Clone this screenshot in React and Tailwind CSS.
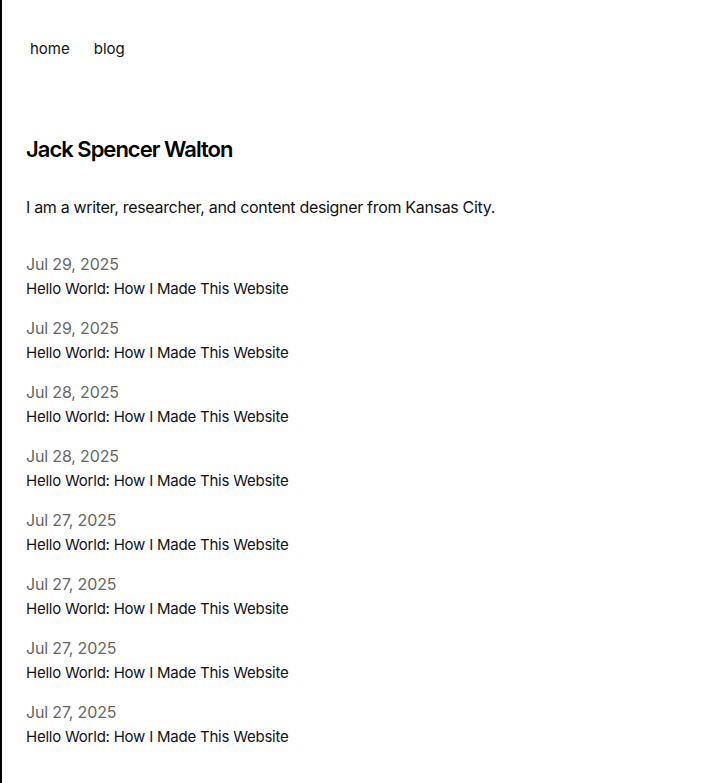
const posts = [
  { date: 'Jul 29, 2025', title: 'Hello World: How I Made This Website' },
  { date: 'Jul 29, 2025', title: 'Hello World: How I Made This Website' },
  { date: 'Jul 28, 2025', title: 'Hello World: How I Made This Website' },
  { date: 'Jul 28, 2025', title: 'Hello World: How I Made This Website' },
  { date: 'Jul 27, 2025', title: 'Hello World: How I Made This Website' },
  { date: 'Jul 27, 2025', title: 'Hello World: How I Made This Website' },
  { date: 'Jul 27, 2025', title: 'Hello World: How I Made This Website' },
  { date: 'Jul 27, 2025', title: 'Hello World: How I Made This Website' },
];

export default function App() {
  return (
    <div className="min-h-screen bg-white border-l-2 border-black font-['Inter',sans-serif] text-[#111] tracking-[-0.02em]">
      <div className="px-6 pt-9 pb-8">
        <nav className="flex gap-6 px-1 pt-px text-[15px] leading-6 tracking-normal">
          <a href="#">home</a>
          <a href="#">blog</a>
        </nav>

        <h1 className="mt-[74px] text-[22px] font-semibold tracking-[-0.045em] leading-7 text-black">
          Jack Spencer Walton
        </h1>

        <p className="mt-8 text-base leading-6">
          I am a writer, researcher, and content designer from Kansas City.
        </p>

        <ul className="mt-[33px] flex flex-col gap-[15px]">
          {posts.map((post, i) => (
            <li key={i} className="flex flex-col">
              <span className="text-base leading-6 tracking-[-0.01em] text-[#666]">
                {post.date}
              </span>
              <a href="#" className="pt-px text-[15px] leading-6 tracking-[-0.015em]">
                {post.title}
              </a>
            </li>
          ))}
        </ul>
      </div>
    </div>
  );
}
